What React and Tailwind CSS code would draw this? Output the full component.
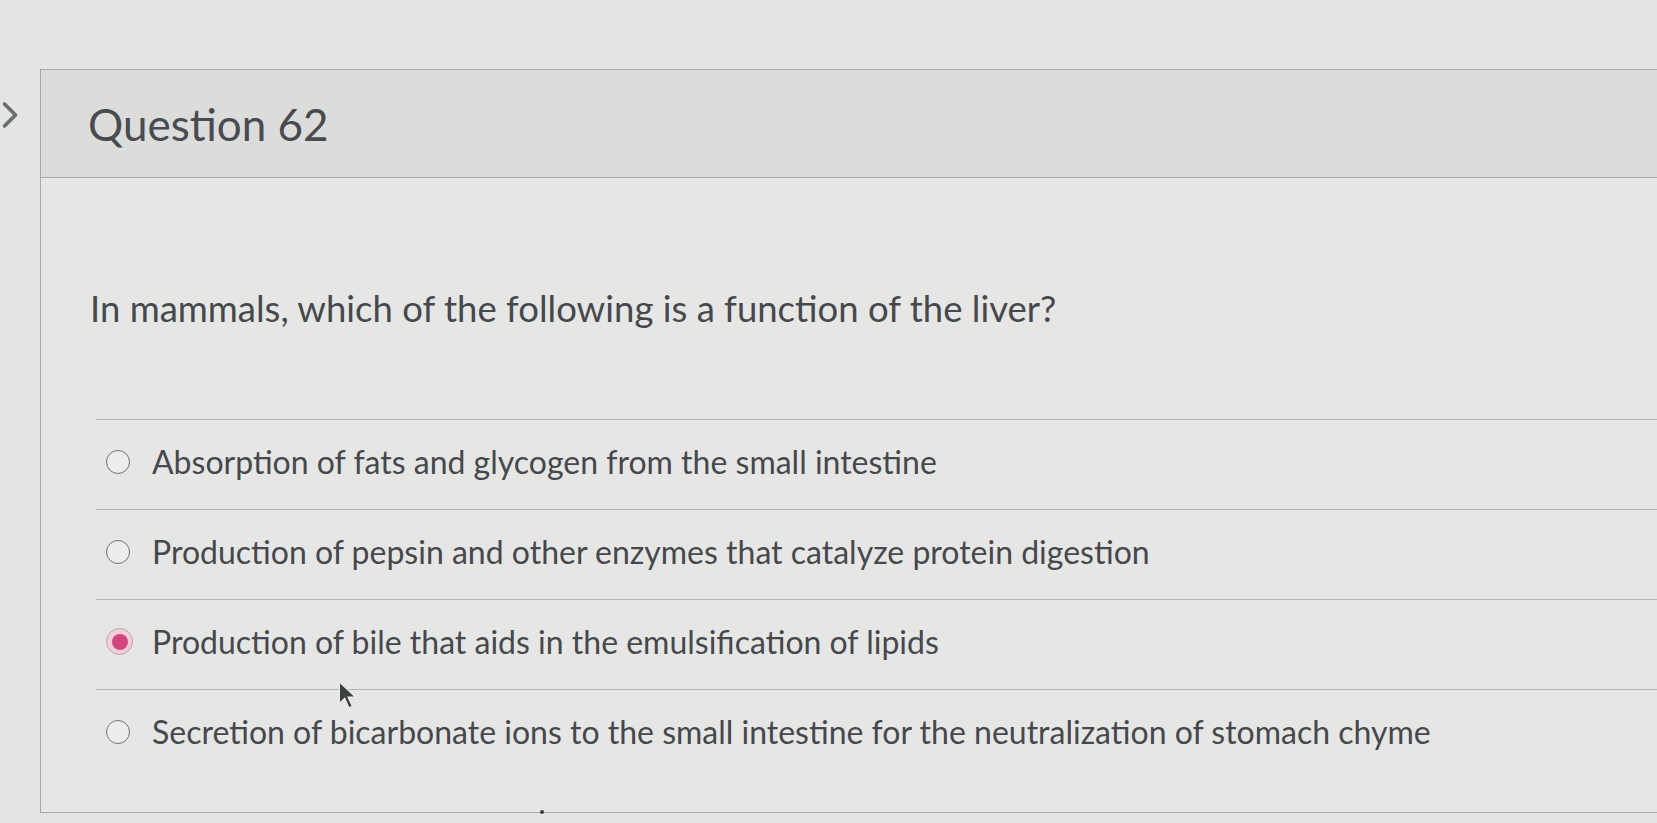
import { ChevronRight } from "lucide-react";

const answers = [
  { id: "a", text: "Absorption of fats and glycogen from the small intestine" },
  { id: "b", text: "Production of pepsin and other enzymes that catalyze protein digestion" },
  { id: "c", text: "Production of bile that aids in the emulsification of lipids", selected: true },
  { id: "d", text: "Secretion of bicarbonate ions to the small intestine for the neutralization of stomach chyme" },
];

function Radio({ selected }) {
  if (selected) {
    return (
      <span className="flex h-[27px] w-[27px] shrink-0 items-center justify-center rounded-full border border-[#b9a3ad] bg-[#f3cddc]">
        <span className="h-[16px] w-[16px] rounded-full bg-[#d2467f]" />
      </span>
    );
  }
  return <span className="h-[24px] w-[24px] shrink-0 rounded-full border-[1.5px] border-[#6e7174] bg-[#eceeec]" />;
}

export default function App() {
  return (
    <div
      className="relative h-[823px] w-[1657px] overflow-hidden bg-[#e4e5e3] text-[#45484c]"
      style={{ fontFamily: "Lato, 'Open Sans', sans-serif" }}
    >
      <ChevronRight className="absolute left-[-12px] top-[93px] h-[44px] w-[44px] text-[#6a6d70]" strokeWidth={2} />

      <div className="ml-[40px] mt-[69px] h-[744px] border border-r-0 border-[#a6a8a6] bg-[#e6e7e5]">
        <div className="flex h-[108px] items-center border-b border-[#a6a8a6] bg-[#dcdddb] pl-[47px]">
          <h1 className="text-[44px] font-normal leading-none text-[#484b4f]">Question 62</h1>
        </div>

        <div className="pl-[49px] pt-[108px]">
          <p className="text-[36.5px] leading-[44px]">In mammals, which of the following is a function of the liver?</p>

          <ul className="mt-[89px] ml-[6px]">
            {answers.map((a) => (
              <li key={a.id} className="flex h-[90px] items-center border-t border-[#b5b7b5] pb-[6px] pl-[10px]">
                <span className="flex w-[46px] items-center justify-start">
                  <Radio selected={a.selected} />
                </span>
                <span className="text-[32px] leading-none">{a.text}</span>
              </li>
            ))}
          </ul>
        </div>
      </div>

      <svg className="absolute left-[337px] top-[680px]" width="24" height="32" viewBox="0 0 22 30">
        <path d="M2 2 L2 22 L7 17 L11 26 L14 24.5 L10 16 L17 16 Z" fill="#3c3f42" stroke="#eeeeee" strokeWidth="1" />
      </svg>
      <span className="absolute left-[540px] top-[810px] h-[4px] w-[4px] rounded-full bg-[#3a3c3e]" />
    </div>
  );
}
